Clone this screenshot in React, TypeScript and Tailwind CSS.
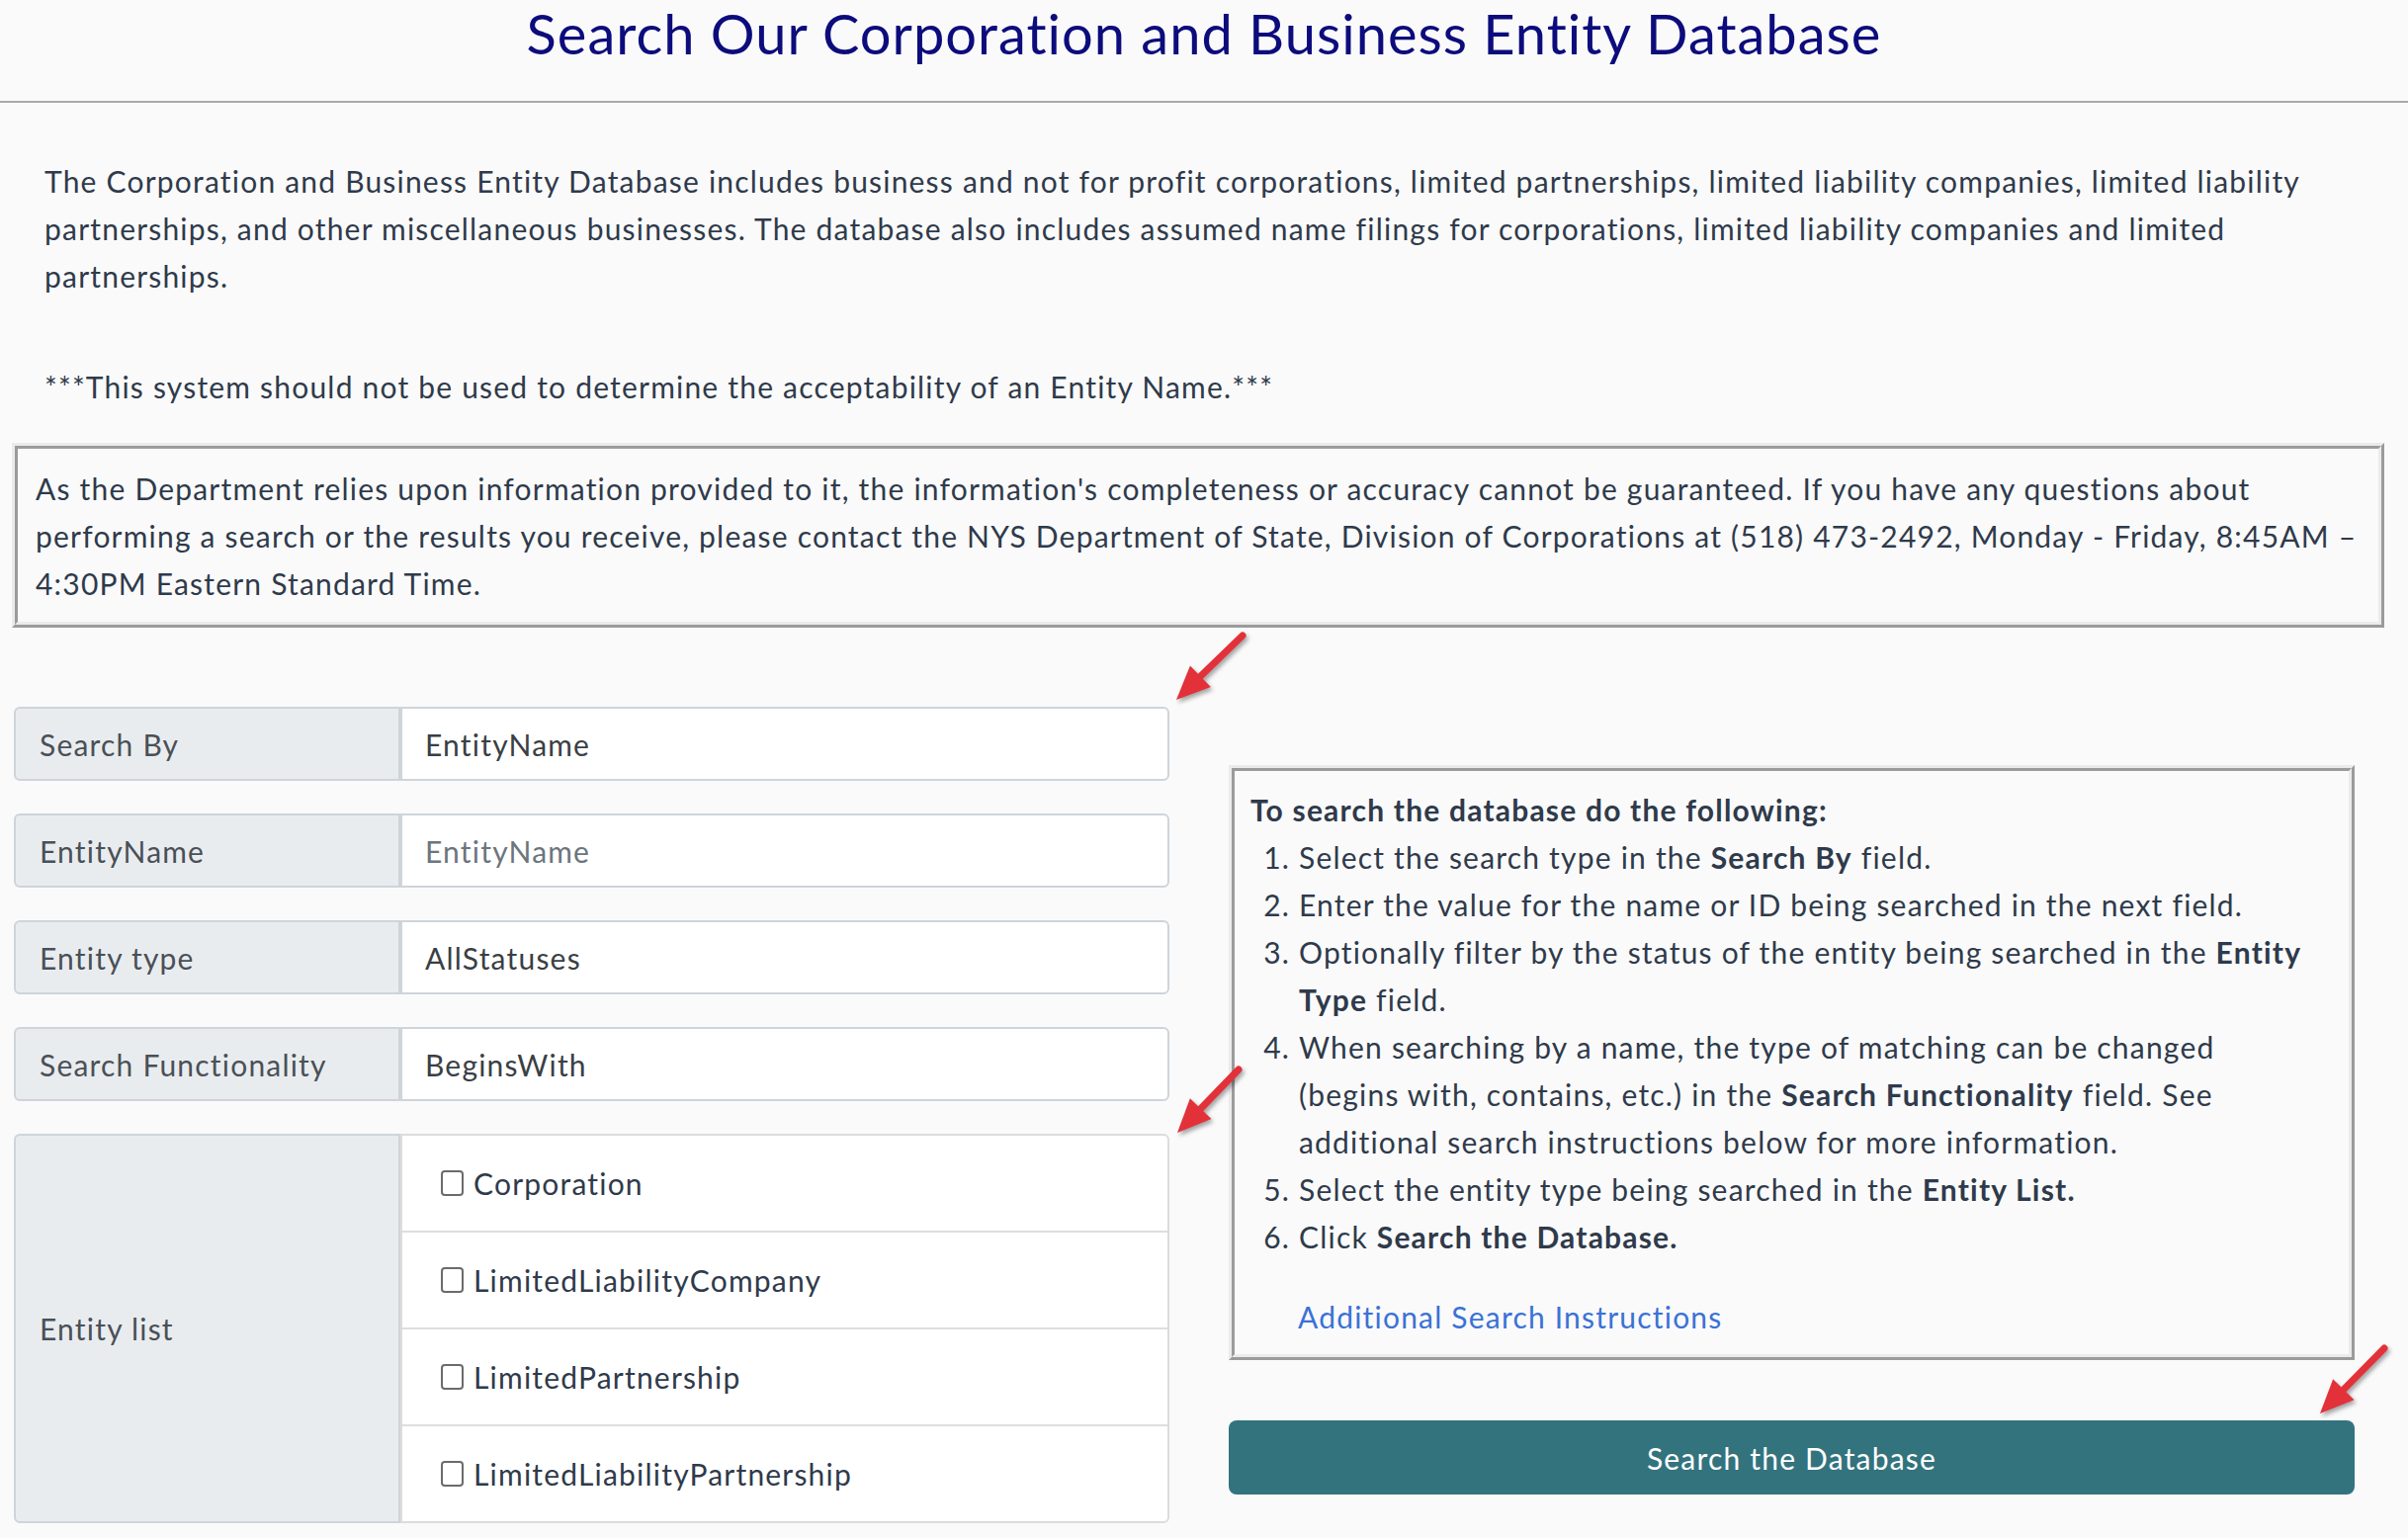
import React from "react";

type Arrow = { x1: number; y1: number; x2: number; y2: number };

// red annotation arrows, tail -> tip, page coordinates
const arrows: Arrow[] = [
  { x1: 1257, y1: 643, x2: 1190, y2: 708 },
  { x1: 1253, y1: 1082, x2: 1191, y2: 1146 },
  { x1: 2412, y1: 1364, x2: 2347, y2: 1430 },
];

function ArrowShape({ x1, y1, x2, y2 }: Arrow) {
  const dx = x2 - x1;
  const dy = y2 - y1;
  const len = Math.hypot(dx, dy);
  const ux = dx / len;
  const uy = dy / len;
  const head = 34;
  const half = 15;
  const bx = x2 - ux * head;
  const by = y2 - uy * head;
  const px = -uy;
  const py = ux;
  const pts = `${x2},${y2} ${bx + px * half},${by + py * half} ${bx - px * half},${by - py * half}`;
  return (
    <g>
      <line x1={x1} y1={y1} x2={bx + ux * 4} y2={by + uy * 4} stroke="#e3313a" strokeWidth={7} strokeLinecap="round" />
      <polygon points={pts} fill="#e3313a" />
    </g>
  );
}

const rows = [
  { label: "Search By", value: "EntityName", placeholder: false },
  { label: "EntityName", value: "EntityName", placeholder: true },
  { label: "Entity type", value: "AllStatuses", placeholder: false },
  { label: "Search Functionality", value: "BeginsWith", placeholder: false },
];

const entityTypes = [
  "Corporation",
  "LimitedLiabilityCompany",
  "LimitedPartnership",
  "LimitedLiabilityPartnership",
];

export default function App() {
  return (
    <div className="relative min-h-[1556px] bg-[#fafafa] text-[#2f3a4b] font-['Lato',sans-serif] text-[30px] leading-[48px] tracking-[1.2px]">
      <div className="h-[104px] border-b-2 border-[#a9a9a9]">
        <h1 className="text-center text-[56px] leading-[68px] tracking-[1px] text-[#0c0c7d]">
          Search Our Corporation and Business Entity Database
        </h1>
      </div>

      <div className="pl-3 pr-6">
        <p className="mt-[55px] pl-[33px] pr-[52px]">
          The Corporation and Business Entity Database includes business and not for profit corporations, limited
          partnerships, limited liability companies, limited liability partnerships, and other miscellaneous businesses.
          The database also includes assumed name filings for corporations, limited liability companies and limited
          partnerships.
        </p>
        <p className="mt-[64px] pl-[33px]">
          ***This system should not be used to determine the acceptability of an Entity Name.***
        </p>

        <div className="mt-[33px] border-[3px] border-t-[#ebebeb] border-l-[#ebebeb] border-b-[#9b9b9b] border-r-[#9b9b9b]">
          <div className="border-[3px] border-t-[#9b9b9b] border-l-[#9b9b9b] border-b-[#ebebeb] border-r-[#ebebeb] pt-[16px] pb-[15px] pl-[18px] pr-[18px]">
            As the Department relies upon information provided to it, the information's completeness or accuracy cannot
            be guaranteed. If you have any questions about performing a search or the results you receive, please
            contact the NYS Department of State, Division of Corporations at (518) 473-2492, Monday - Friday, 8:45AM –
            4:30PM Eastern Standard Time.
          </div>
        </div>

        <div className="mt-[80px] flex gap-[60px] pb-[14px]">
          <div className="ml-[2px] flex w-[1169px] flex-col gap-[33px]">
            {rows.map((r) => (
              <div key={r.label} className="flex h-[75px]">
                <div className="flex w-[391px] items-center rounded-l-[6px] border-2 border-[#ced4da] bg-[#e9ecef] px-[24px] text-[#495057]">
                  {r.label}
                </div>
                <div
                  className={`flex flex-1 items-center rounded-r-[6px] border-2 border-[#ced4da] bg-white px-[23px] ${
                    r.placeholder ? "text-[#6c757d]" : "text-[#3a3f45]"
                  }`}
                >
                  {r.value}
                </div>
              </div>
            ))}

            <div className="flex h-[394px]">
              <div className="flex w-[391px] items-center rounded-l-[6px] border-2 border-[#ced4da] bg-[#e9ecef] px-[24px] text-[#495057]">
                Entity list
              </div>
              <div className="flex flex-1 flex-col rounded-r-[6px] border-2 border-[#dcdcdc] bg-white">
                {entityTypes.map((t, i) => (
                  <label
                    key={t}
                    className={`flex flex-1 items-center gap-[10px] pl-[39px] ${
                      i < entityTypes.length - 1 ? "border-b-2 border-[#dedede]" : ""
                    }`}
                  >
                    <span className="h-[26px] w-[23px] rounded-[4px] border-2 border-[#6b6b6b] bg-white" />
                    <span>{t}</span>
                  </label>
                ))}
              </div>
            </div>
          </div>

          <div className="mt-[59px] w-[1139px]">
            <div className="border-[3px] border-t-[#ebebeb] border-l-[#ebebeb] border-b-[#9b9b9b] border-r-[#9b9b9b]">
              <div className="border-[3px] border-t-[#9b9b9b] border-l-[#9b9b9b] border-b-[#ebebeb] border-r-[#ebebeb] pt-[15px] pb-[14px] pl-[16px] pr-[38px]">
                <div className="font-bold">To search the database do the following:</div>
                <ol className="list-decimal pl-[49px]">
                  <li>
                    Select the search type in the <b>Search By</b> field.
                  </li>
                  <li>Enter the value for the name or ID being searched in the next field.</li>
                  <li>
                    Optionally filter by the status of the entity being searched in the <b>Entity Type</b> field.
                  </li>
                  <li>
                    When searching by a name, the type of matching can be changed (begins with, contains, etc.) in the{" "}
                    <b>Search Functionality</b> field. See additional search instructions below for more information.
                  </li>
                  <li>
                    Select the entity type being searched in the <b>Entity List.</b>
                  </li>
                  <li>
                    Click <b>Search the Database.</b>
                  </li>
                </ol>
                <a className="mt-[33px] block pl-[48px] text-[#3a72d6]">Additional Search Instructions</a>
              </div>
            </div>
            <button className="mt-[61px] h-[75px] w-full rounded-[8px] bg-[#33737e] text-white">
              Search the Database
            </button>
          </div>
        </div>
      </div>

      <svg className="pointer-events-none absolute inset-0 h-full w-full" style={{ filter: "drop-shadow(2px 3px 2px rgba(0,0,0,0.35))" }}>
        {arrows.map((a, i) => (
          <ArrowShape key={i} {...a} />
        ))}
      </svg>
    </div>
  );
}
